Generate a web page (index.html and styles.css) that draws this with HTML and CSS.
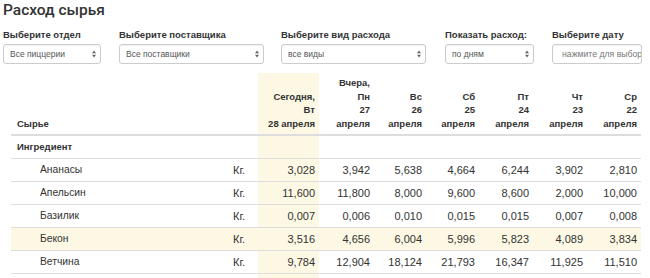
FILE: index.html
```html
<!DOCTYPE html>
<html lang="ru">
<head>
<meta charset="utf-8">
<title>Расход сырья</title>
<link rel="stylesheet" href="styles.css">
</head>
<body>
<div class="page">
  <h1 class="title">Расход сырья</h1>
  <div class="filters">
    <div class="field f1">
      <div class="label">Выберите отдел</div>
      <div class="select">Все пиццерии<svg class="arrow" viewBox="0 0 4 8" width="4" height="8"><path d="M0 3.2L2 0.6L4 3.2Z M0 4.8L2 7.4L4 4.8Z" fill="#666"/></svg></div>
    </div>
    <div class="field f2">
      <div class="label">Выберите поставщика</div>
      <div class="select">Все поставщики<svg class="arrow" viewBox="0 0 4 8" width="4" height="8"><path d="M0 3.2L2 0.6L4 3.2Z M0 4.8L2 7.4L4 4.8Z" fill="#666"/></svg></div>
    </div>
    <div class="field f3">
      <div class="label">Выберите вид расхода</div>
      <div class="select">все виды<svg class="arrow" viewBox="0 0 4 8" width="4" height="8"><path d="M0 3.2L2 0.6L4 3.2Z M0 4.8L2 7.4L4 4.8Z" fill="#666"/></svg></div>
    </div>
    <div class="field f4">
      <div class="label">Показать расход:</div>
      <div class="select">по дням<svg class="arrow" viewBox="0 0 4 8" width="4" height="8"><path d="M0 3.2L2 0.6L4 3.2Z M0 4.8L2 7.4L4 4.8Z" fill="#666"/></svg></div>
    </div>
    <div class="field f5">
      <div class="label">Выберите дату</div>
      <div class="input"><span class="placeholder">нажмите для выбора</span></div>
    </div>
  </div>
  <table class="grid">
    <colgroup>
      <col class="c-name"><col class="c-unit"><col class="c-today">
      <col class="c-d1"><col class="c-d2"><col class="c-d3"><col class="c-d4"><col class="c-d5"><col class="c-d6">
    </colgroup>
    <thead>
      <tr>
        <th class="left">Сырье</th>
        <th></th>
        <th class="today">Сегодня,<br>Вт<br>28 апреля</th>
        <th>Вчера,<br>Пн<br>27<br>апреля</th>
        <th>Вс<br>26<br>апреля</th>
        <th>Сб<br>25<br>апреля</th>
        <th>Пт<br>24<br>апреля</th>
        <th>Чт<br>23<br>апреля</th>
        <th>Ср<br>22<br>апреля</th>
      </tr>
    </thead>
    <tbody>
      <tr class="group">
        <td class="left bold">Ингредиент</td><td></td><td class="today"></td><td></td><td></td><td></td><td></td><td></td><td></td>
      </tr>
      <tr>
        <td class="name">Ананасы</td><td class="unit">Кг.</td><td class="today">3,028</td><td>3,942</td><td>5,638</td><td>4,664</td><td>6,244</td><td>3,902</td><td>2,810</td>
      </tr>
      <tr>
        <td class="name">Апельсин</td><td class="unit">Кг.</td><td class="today">11,600</td><td>11,800</td><td>8,000</td><td>9,600</td><td>8,600</td><td>2,000</td><td>10,000</td>
      </tr>
      <tr>
        <td class="name">Базилик</td><td class="unit">Кг.</td><td class="today">0,007</td><td>0,006</td><td>0,010</td><td>0,015</td><td>0,015</td><td>0,007</td><td>0,008</td>
      </tr>
      <tr class="warn">
        <td class="name">Бекон</td><td class="unit">Кг.</td><td class="today">3,516</td><td>4,656</td><td>6,004</td><td>5,996</td><td>5,823</td><td>4,089</td><td>3,834</td>
      </tr>
      <tr>
        <td class="name">Ветчина</td><td class="unit">Кг.</td><td class="today">9,784</td><td>12,904</td><td>18,124</td><td>21,793</td><td>16,347</td><td>11,925</td><td>11,510</td>
      </tr>
      <tr>
        <td class="name">&nbsp;</td><td class="unit"></td><td class="today"></td><td></td><td></td><td></td><td></td><td></td><td></td>
      </tr>
    </tbody>
  </table>
</div>
</body>
</html>
```
FILE: styles.css
```css
html, body {
  margin: 0;
  padding: 0;
  background: #fff;
  overflow: hidden;
}
body {
  font-family: "Liberation Sans", Arial, sans-serif;
  color: #333;
  font-size: 11px;
}
.page {
  padding: 0 7px 0 3px;
}
.title {
  margin: 0;
  padding-top: 1px;
  font-family: Roboto, "Liberation Sans", Arial, sans-serif;
  font-size: 15.5px;
  line-height: 18px;
  font-weight: 500;
  color: #333;
}
.filters {
  display: flex;
  margin-top: 10px;
}
.field {
  display: flex;
  flex-direction: column;
  gap: 3px;
}
.f1 { width: 98px; }
.f2 { width: 145px; margin-left: 18px; }
.f3 { width: 145px; margin-left: 17px; }
.f4 { width: 89px; margin-left: 19px; }
.f5 { width: 90px; margin-left: 18px; }
.label {
  font-weight: bold;
  font-size: 9.5px;
  line-height: 12px;
  white-space: nowrap;
}
.select, .input {
  box-sizing: border-box;
  height: 20px;
  border: 1px solid #ccc;
  border-radius: 3px;
  background: #fff;
  box-shadow: inset 0 1px 1px rgba(0,0,0,0.05);
  display: flex;
  align-items: center;
  justify-content: space-between;
  padding: 0 4px 0 6px;
  font-size: 8.5px;
  color: #555;
  white-space: nowrap;
  overflow: hidden;
}
.input {
  padding: 0 0 0 9px;
  justify-content: flex-start;
  font-size: 8.7px;
}
.placeholder {
  color: #777;
}
.grid {
  margin: 9px 0 0 8px;
  width: 630px;
  table-layout: fixed;
  border-collapse: collapse;
  font-size: 11px;
}
.c-name { width: 218px; }
.c-unit { width: 29px; }
.c-today { width: 61px; }
.c-d1 { width: 55px; }
.c-d2 { width: 52px; }
.c-d3 { width: 53px; }
.c-d4 { width: 54px; }
.c-d5 { width: 54px; }
.c-d6 { width: 54px; }
.grid th {
  font-weight: bold;
  font-size: 9.5px;
  text-align: right;
  vertical-align: bottom;
  padding: 3px 4px 4px;
  line-height: 13.5px;
  border-bottom: 2px solid #ddd;
  white-space: nowrap;
}
.grid th.left { text-align: left; padding-left: 6px; }
.grid td {
  text-align: right;
  padding: 5px 4px;
  line-height: 12px;
  border-top: 1px solid #ddd;
  white-space: nowrap;
}
.grid tr.group td { border-top: none; }
.grid td.left { text-align: left; padding-left: 6px; }
.grid td.bold { font-weight: bold; font-size: 9.5px; }
.grid td.name { text-align: left; padding-left: 29px; font-size: 10.3px; }
.grid td.unit { text-align: left; }
.grid .today { background: #fcf8e3; }
.grid tr.warn td { background: #fcf8e3; }
```
